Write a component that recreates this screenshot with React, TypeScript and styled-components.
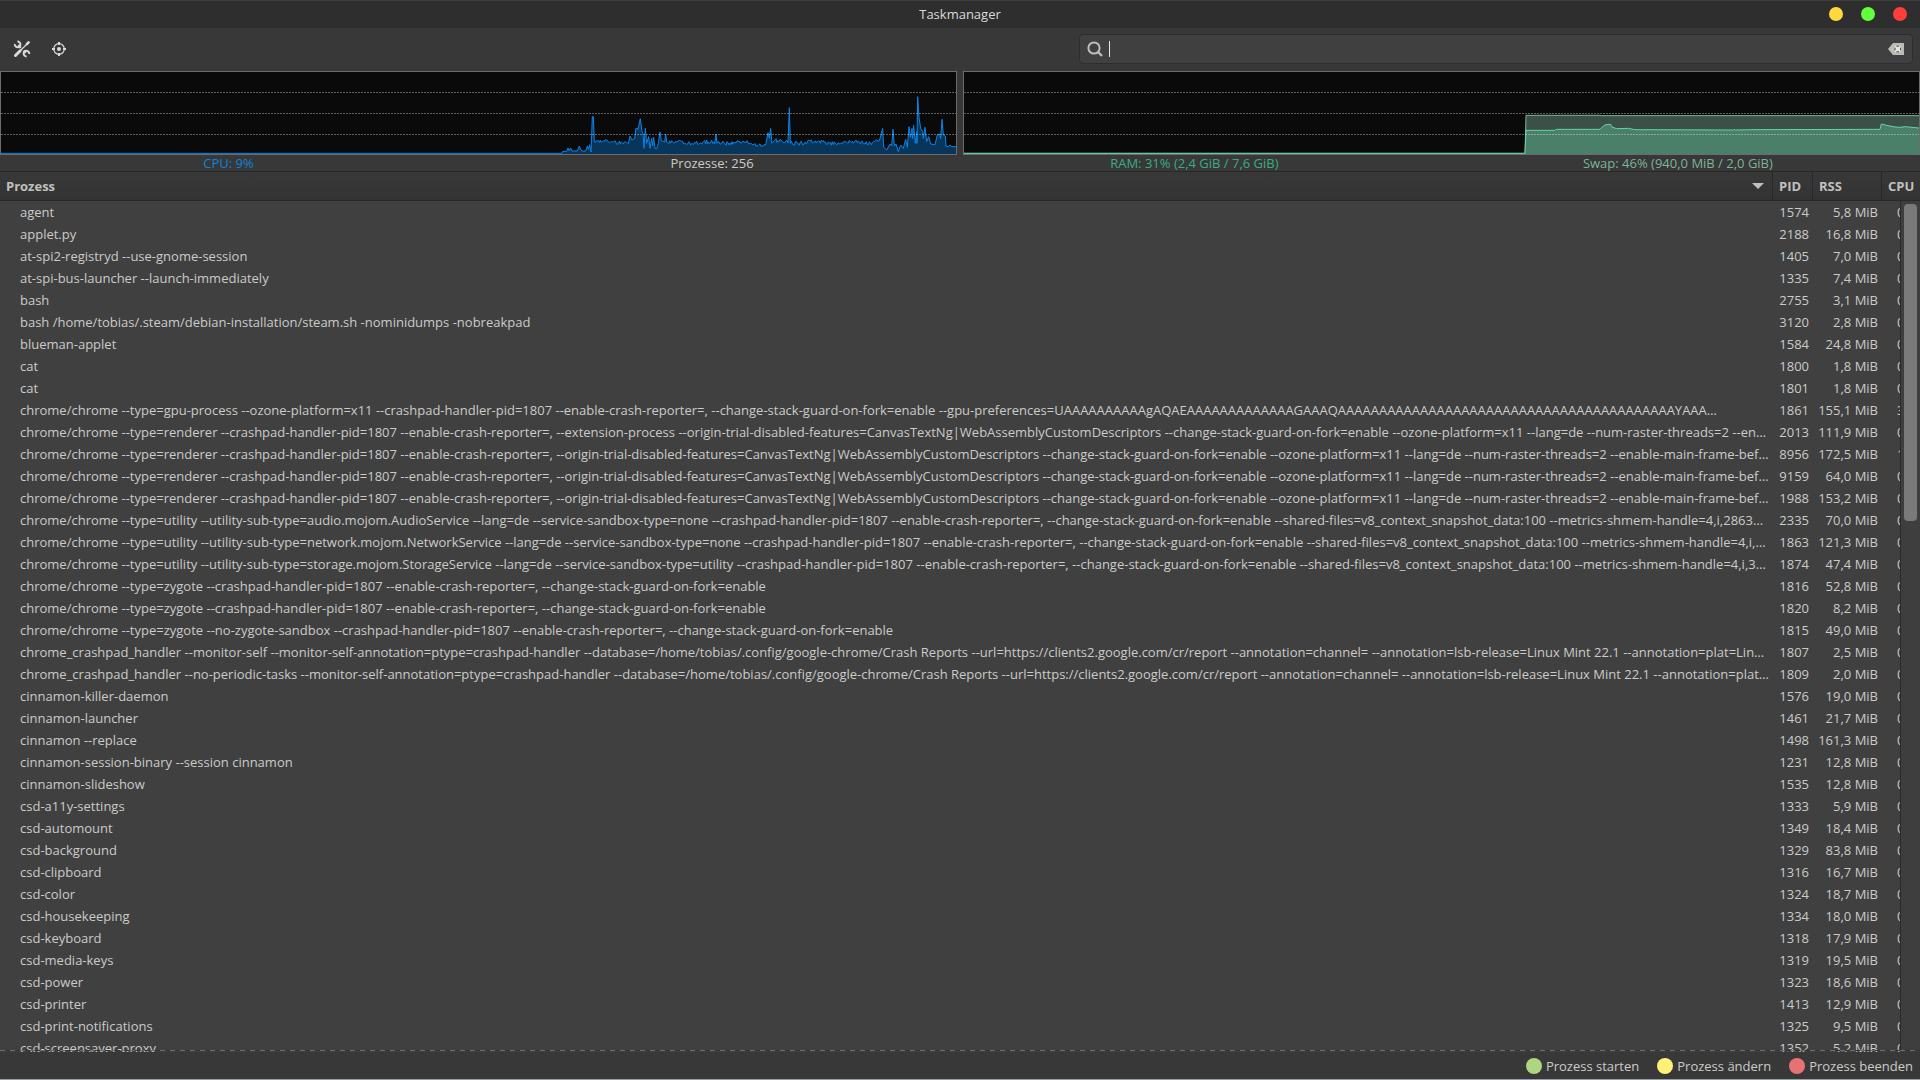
import React from 'react';
import styled, { createGlobalStyle } from 'styled-components';

const GlobalStyle = createGlobalStyle`
  * { box-sizing: border-box; }
  body {
    margin: 0;
    background: #383838;
    color: #cbcbc9;
    font: 13px/16px "Open Sans", "Noto Sans", sans-serif;
  }
  button, input { font: inherit; color: inherit; }
`;

const Window = styled.div`
  display: flex;
  flex-direction: column;
  height: 100vh;
  overflow: hidden;
  background: #383838;
  border-bottom: 1px solid #96a0a5;
`;

const TitleBar = styled.header`
  display: grid;
  grid-template-columns: 1fr auto 1fr;
  align-items: center;
  height: 28px;
  padding: 0 13px 1px;
  border-top: 1px solid #3d3d3d;
  background: #2e2e2e;
`;

const Title = styled.h1`
  grid-column: 2;
  margin: 0;
  font-size: 13px;
  font-weight: 400;
  color: #dadada;
`;

const WindowControls = styled.div`
  display: flex;
  justify-content: flex-end;
  gap: 18px;
`;

const WindowButton = styled.button<{ $color: string }>`
  width: 14px;
  height: 14px;
  padding: 0;
  border: 0;
  border-radius: 50%;
  background: ${(p) => p.$color};
`;

const Toolbar = styled.div`
  display: flex;
  align-items: center;
  justify-content: space-between;
  height: 43px;
  padding: 0 7px 1px;
`;

const ToolGroup = styled.div`
  display: flex;
  gap: 7px;
`;

const ToolButton = styled.button`
  display: grid;
  place-items: center;
  width: 30px;
  height: 30px;
  padding: 0;
  border: 0;
  background: none;
  color: #dadada;
`;

const SearchBox = styled.label`
  display: flex;
  align-items: center;
  gap: 6px;
  width: 834px;
  max-width: 60%;
  height: 30px;
  padding: 0 8px 0 7px;
  border: 1px solid #2a2d33;
  border-radius: 4px;
  background: #404040;
`;

const Caret = styled.span`
  width: 1px;
  height: 16px;
  background: #e6e6e6;
`;

const SearchInput = styled.input`
  flex: 1;
  min-width: 0;
  padding: 0;
  border: 0;
  outline: 0;
  background: none;
  caret-color: transparent;
`;

const ClearButton = styled.button`
  display: flex;
  padding: 0;
  border: 0;
  background: none;
  color: #bbbcb7;
`;

const Monitors = styled.div`
  display: grid;
  grid-template-columns: 1fr 1fr;
  gap: 6px;
`;

const Monitor = styled.section`
  min-width: 0;
`;

const Plot = styled.svg`
  display: block;
  width: 100%;
  height: 84px;
  border: 1px solid #6c6c6c;
  background: #0a0a0a;

  * { vector-effect: non-scaling-stroke; }
`;

const Readings = styled.div`
  display: flex;
  gap: 10px;
  height: 16px;
`;

const Reading = styled.span<{ $color: string }>`
  flex: 1 1 auto;
  text-align: center;
  color: ${(p) => p.$color};
`;

const ListPane = styled.main`
  position: relative;
  flex: 1;
  min-height: 0;
  overflow: hidden;
  background: #404040;
`;

const ProcessTable = styled.table`
  width: 100%;
  table-layout: fixed;
  border-collapse: separate;
  border-spacing: 0;
`;

const HeaderCell = styled.th<{ $width?: number }>`
  width: ${(p) => (p.$width ? `${p.$width}px` : 'auto')};
  height: 30px;
  padding: 0;
  border: solid #282828;
  border-width: 1px 1px 1px 0;
  background: linear-gradient(#383838, #333333);

  &:last-child { border-right: 0; }
`;

const SortButton = styled.button`
  display: flex;
  align-items: center;
  justify-content: space-between;
  width: 100%;
  height: 28px;
  padding: 0 7px 0 6px;
  border: 0;
  background: none;
  font-weight: 700;
  color: #c0c0be;
  white-space: nowrap;
`;

const SortArrow = styled.span`
  margin-right: 1px;
  border: solid transparent;
  border-width: 6px 6px 0;
  border-top-color: #c0c0be;
`;

const NameCell = styled.td`
  height: 22px;
  padding: 0 4px 0 20px;
  overflow: hidden;
  text-overflow: ellipsis;
  white-space: nowrap;
`;

const NumberCell = styled.td`
  padding: 0 4px 0 0;
  text-align: right;
  white-space: nowrap;
`;

const CpuCell = styled.td`
  padding: 0 20px 0 15px;
  overflow: hidden;
  white-space: nowrap;
`;

const CpuValue = styled.span`
  display: block;
  overflow: hidden;
`;

const ScrollTrack = styled.div`
  position: absolute;
  top: 30px;
  right: 0;
  bottom: 0;
  width: 20px;
  padding: 3px;
  border-left: 1px solid #2a2a2a;
  background: #3e3e3e;
`;

const ScrollThumb = styled.div`
  height: 37.5%;
  border-radius: 4px;
  background: #7a7a7a;
`;

const Undershoot = styled.div`
  position: absolute;
  right: 0;
  bottom: 1px;
  left: 0;
  height: 1px;
  background: repeating-linear-gradient(90deg, #6e6e6e 0 5px, #333333 5px 10px);
`;

const Legend = styled.ul`
  display: flex;
  justify-content: flex-end;
  align-items: center;
  gap: 18px;
  height: 27px;
  margin: 0;
  padding: 0 7px;
  list-style: none;
`;

const LegendItem = styled.li<{ $color: string }>`
  display: flex;
  align-items: center;
  gap: 4px;

  &::before {
    content: "";
    width: 16px;
    height: 16px;
    border-radius: 50%;
    background: ${(p) => p.$color};
  }
`;

type Point = [number, number];

/* Small steady load jitter between two busy moments. */
const idle = (from: number, to: number, level: number): Point[] => {
  const out: Point[] = [];
  for (let x = from, i = 0; x < to; x += 3, i += 1) {
    const r = Math.abs(Math.sin((x + i) * 12.9898) * 43758.5453) % 1;
    const wave = Math.sin(x / 17) * 3;
    out.push([x, level + wave + (r - 0.5) * 12]);
  }
  return out;
};

const cpuHistory: Point[] = [
  [-1617, 280], [66, 280], [68, 274], [80, 274], [84, 264], [87, 272], [92, 264], [96, 273],
  [112, 273], [118, 258], [122, 270], [130, 274], [138, 272], [142, 258], [145, 268], [149, 254],
  [153, 276], [157, 170], [160, 170],
  ...idle(163, 268, 246),
  [270, 228], [276, 240], [284, 236], [288, 204], [294, 208], [301, 176], [306, 215], [309, 220],
  [312, 265], [316, 205], [320, 250], [326, 230], [330, 265], [335, 235], [338, 258], [341, 232],
  [345, 265], [350, 266], [355, 250], [360, 216], [364, 242], [374, 246], [377, 222], [380, 246],
  ...idle(383, 525, 248),
  [528, 222], [531, 250],
  ...idle(534, 630, 247),
  ...idle(630, 681, 252),
  [684, 218], [688, 235], [692, 205], [696, 250], [708, 236],
  ...idle(711, 745, 245),
  [748, 143], [751, 250],
  ...idle(754, 1006, 247),
  [1010, 240], [1016, 244], [1020, 236], [1028, 205], [1031, 262], [1040, 270], [1050, 252],
  [1055, 258], [1059, 208], [1063, 258], [1068, 252], [1075, 275], [1082, 255], [1090, 265],
  [1097, 238], [1102, 262], [1107, 200], [1111, 232], [1116, 205], [1118, 236], [1121, 196],
  [1126, 250], [1130, 215], [1131, 250], [1133, 110], [1137, 172], [1142, 205], [1148, 215],
  [1150, 235], [1155, 202], [1160, 245], [1166, 230], [1172, 252], [1185, 254], [1192, 225],
  [1198, 222], [1202, 236], [1206, 178], [1210, 225], [1216, 228], [1218, 258], [1224, 260],
  [1230, 255], [1236, 260], [1248, 260],
];

const swapHistory: Point[] = [[-1608, 460], [75, 460], [78, 346], [300, 346], [304, 347], [1257, 347]];

const ramHistory: Point[] = [
  [-1608, 460], [75, 460], [78, 391], [165, 391], [168, 388], [210, 388], [300, 388], [310, 378],
  [318, 374], [332, 373], [336, 381], [350, 386], [385, 385], [405, 389], [700, 390], [702, 388],
  [706, 390], [756, 389], [1140, 388], [1144, 372], [1160, 376], [1185, 381], [1200, 382],
  [1215, 380], [1257, 384],
];

type Series = { points: Point[]; line: string; fill: string };

function HistoryPlot({ label, left, top, series }: { label: string; left: number; top: number; series: Series[] }) {
  const right = left + 2865;
  const bottom = top + 246;
  return (
    <Plot viewBox={`${left} ${top} 2865 246`} preserveAspectRatio="none" role="img" aria-label={label}>
      {series.map((s) => {
        const line = s.points.map((p) => p.join(',')).join(' ');
        return (
          <g key={s.line}>
            <polygon points={`${left},${bottom} ${line} ${right},${bottom}`} fill={s.fill} />
            <polyline points={line} fill="none" stroke={s.line} strokeWidth="1" />
          </g>
        );
      })}
      {[61.5, 124.5, 187.5].map((y) => (
        <line
          key={y}
          x1={left}
          x2={right}
          y1={top + y}
          y2={top + y}
          stroke="#ffffff"
          strokeOpacity="0.34"
          strokeDasharray="2 1"
        />
      ))}
    </Plot>
  );
}

const ToolsIcon = () => (
  <svg width="18" height="18" viewBox="0 0 18 18" fill="none" stroke="currentColor" aria-hidden="true">
    <path d="M2.5 15.5 L7.2 10.8" strokeWidth="3" strokeLinecap="round" />
    <path d="M7.5 10.5 L14.5 3.5" strokeWidth="1.3" />
    <path d="M13.8 4.2 L15.6 2.4" strokeWidth="2.6" strokeLinecap="round" />
    <path d="M5.2 5.2 L7.8 7.8 M10.6 10.6 L12.8 12.8" strokeWidth="2.4" />
    <path d="M1.8 4 a2.8 2.8 0 1 0 2.6 -2.4 M16.2 14 a2.8 2.8 0 1 0 -2.6 2.4" strokeWidth="2" />
  </svg>
);

const TargetIcon = () => (
  <svg width="14" height="14" viewBox="0 0 14 14" fill="none" stroke="currentColor" aria-hidden="true">
    <circle cx="7" cy="7" r="5.3" strokeWidth="1.2" />
    <circle cx="7" cy="7" r="2" fill="currentColor" stroke="none" />
    <path d="M7 0v3M7 11v3M0 7h3M11 7h3" strokeWidth="2" />
  </svg>
);

const SearchIcon = () => (
  <svg width="16" height="16" viewBox="0 0 16 16" fill="none" stroke="#bdbdbb" strokeWidth="2" aria-hidden="true">
    <circle cx="7" cy="7" r="5.6" />
    <path d="M11 11l4 4" strokeWidth="2.4" />
  </svg>
);

const ClearIcon = () => (
  <svg width="16" height="12" viewBox="0 0 16 12" aria-hidden="true">
    <path d="M0 6L5 0h11v12H5z" fill="currentColor" />
    <path d="M7 3.2l5.5 5.6M12.5 3.2L7 8.8" stroke="#e8e8e6" strokeWidth="2" />
    <path d="M7 4.6v2.8M12.5 4.6v2.8M8.4 3.2h2.8M8.4 8.8h2.8" stroke="#5a5a58" strokeWidth="1" />
  </svg>
);

const DISABLED = '--origin-trial-disabled-features=CanvasTextNg|WebAssemblyCustomDescriptors';
const STACK = '--change-stack-guard-on-fork=enable';
const CRASH = '--crashpad-handler-pid=1807 --enable-crash-reporter=,';
const RENDERER = `chrome/chrome --type=renderer ${CRASH} ${DISABLED} ${STACK} --ozone-platform=x11 --lang=de --num-raster-threads=2 --enable-main-frame-befor…`;
const GPU_PREFS = `U${'A'.repeat(10)}gAQAE${'A'.repeat(13)}GAAAQ${'A'.repeat(41)}YAAA…`;
const SNAPSHOT = '--shared-files=v8_context_snapshot_data:100 --metrics-shmem-handle=4,i,';
const REPORT = '--monitor-self-annotation=ptype=crashpad-handler --database=/home/tobias/.config/google-chrome/Crash Reports --url=https://clients2.google.com/cr/report --annotation=channel= --annotation=lsb-release=Linux Mint 22.1';

const processes: [string, number, string, string?][] = [
  ['agent', 1574, '5,8'],
  ['applet.py', 2188, '16,8'],
  ['at-spi2-registryd --use-gnome-session', 1405, '7,0'],
  ['at-spi-bus-launcher --launch-immediately', 1335, '7,4'],
  ['bash', 2755, '3,1'],
  ['bash /home/tobias/.steam/debian-installation/steam.sh -nominidumps -nobreakpad', 3120, '2,8'],
  ['blueman-applet', 1584, '24,8'],
  ['cat', 1800, '1,8'],
  ['cat', 1801, '1,8'],
  [`chrome/chrome --type=gpu-process --ozone-platform=x11 ${CRASH} ${STACK} --gpu-preferences=${GPU_PREFS}`, 1861, '155,1', '3%'],
  [`chrome/chrome --type=renderer ${CRASH} --extension-process ${DISABLED} ${STACK} --ozone-platform=x11 --lang=de --num-raster-threads=2 --enabl…`, 2013, '111,9'],
  [RENDERER, 8956, '172,5', '1%'],
  [RENDERER, 9159, '64,0'],
  [RENDERER, 1988, '153,2'],
  [`chrome/chrome --type=utility --utility-sub-type=audio.mojom.AudioService --lang=de --service-sandbox-type=none ${CRASH} ${STACK} ${SNAPSHOT}28631…`, 2335, '70,0'],
  [`chrome/chrome --type=utility --utility-sub-type=network.mojom.NetworkService --lang=de --service-sandbox-type=none ${CRASH} ${STACK} ${SNAPSHOT}1…`, 1863, '121,3'],
  [`chrome/chrome --type=utility --utility-sub-type=storage.mojom.StorageService --lang=de --service-sandbox-type=utility ${CRASH} ${STACK} ${SNAPSHOT}37…`, 1874, '47,4'],
  [`chrome/chrome --type=zygote ${CRASH} ${STACK}`, 1816, '52,8'],
  [`chrome/chrome --type=zygote ${CRASH} ${STACK}`, 1820, '8,2'],
  [`chrome/chrome --type=zygote --no-zygote-sandbox ${CRASH} ${STACK}`, 1815, '49,0'],
  [`chrome_crashpad_handler --monitor-self ${REPORT} --annotation=plat=Lin…`, 1807, '2,5'],
  [`chrome_crashpad_handler --no-periodic-tasks ${REPORT} --annotation=plat…`, 1809, '2,0'],
  ['cinnamon-killer-daemon', 1576, '19,0'],
  ['cinnamon-launcher', 1461, '21,7'],
  ['cinnamon --replace', 1498, '161,3'],
  ['cinnamon-session-binary --session cinnamon', 1231, '12,8'],
  ['cinnamon-slideshow', 1535, '12,8'],
  ['csd-a11y-settings', 1333, '5,9'],
  ['csd-automount', 1349, '18,4'],
  ['csd-background', 1329, '83,8'],
  ['csd-clipboard', 1316, '16,7'],
  ['csd-color', 1324, '18,7'],
  ['csd-housekeeping', 1334, '18,0'],
  ['csd-keyboard', 1318, '17,9'],
  ['csd-media-keys', 1319, '19,5'],
  ['csd-power', 1323, '18,6'],
  ['csd-printer', 1413, '12,9'],
  ['csd-print-notifications', 1325, '9,5'],
  ['csd-screensaver-proxy', 1352, '5,2'],
];

export default function App() {
  return (
    <Window>
      <GlobalStyle />
      <TitleBar>
        <Title>Taskmanager</Title>
        <WindowControls>
          <WindowButton $color="#ffd83d" aria-label="Minimieren" />
          <WindowButton $color="#62ff3d" aria-label="Maximieren" />
          <WindowButton $color="#ff3d3d" aria-label="Schließen" />
        </WindowControls>
      </TitleBar>

      <Toolbar>
        <ToolGroup>
          <ToolButton aria-label="Einstellungen"><ToolsIcon /></ToolButton>
          <ToolButton aria-label="Fenster auswählen"><TargetIcon /></ToolButton>
        </ToolGroup>
        <SearchBox>
          <SearchIcon />
          <Caret />
          <SearchInput type="text" aria-label="Prozess suchen" />
          <ClearButton type="button" aria-label="Leeren"><ClearIcon /></ClearButton>
        </SearchBox>
      </Toolbar>

      <Monitors>
        <Monitor>
          <HistoryPlot
            label="CPU"
            left={-1617}
            top={36}
            series={[{ points: cpuHistory, line: '#0a84ea', fill: '#08355a' }]}
          />
          <Readings>
            <Reading $color="#0f82dc">CPU: 9%</Reading>
            <Reading $color="#cbcbc9">Prozesse: 256</Reading>
          </Readings>
        </Monitor>
        <Monitor>
          <HistoryPlot
            label="RAM und Swap"
            left={-1608}
            top={216}
            series={[
              { points: swapHistory, line: '#7ab89f', fill: '#3b5047' },
              { points: ramHistory, line: '#66d3a8', fill: '#4a806a' },
            ]}
          />
          <Readings>
            <Reading $color="#37ae82">RAM: 31% (2,4 GiB / 7,6 GiB)</Reading>
            <Reading $color="#7ab598">Swap: 46% (940,0 MiB / 2,0 GiB)</Reading>
          </Readings>
        </Monitor>
      </Monitors>

      <ListPane>
        <ProcessTable>
          <thead>
            <tr>
              <HeaderCell scope="col" aria-sort="ascending"><SortButton>Prozess<SortArrow /></SortButton></HeaderCell>
              <HeaderCell scope="col" $width={40}><SortButton>PID</SortButton></HeaderCell>
              <HeaderCell scope="col" $width={69}><SortButton>RSS</SortButton></HeaderCell>
              <HeaderCell scope="col" $width={38}><SortButton>CPU</SortButton></HeaderCell>
            </tr>
          </thead>
          <tbody>
            {processes.map(([name, pid, rss, cpu = '0%']) => (
              <tr key={pid}>
                <NameCell>{name}</NameCell>
                <NumberCell>{pid}</NumberCell>
                <NumberCell>{rss} MiB</NumberCell>
                <CpuCell><CpuValue>{cpu}</CpuValue></CpuCell>
              </tr>
            ))}
          </tbody>
        </ProcessTable>
        <ScrollTrack><ScrollThumb /></ScrollTrack>
        <Undershoot />
      </ListPane>

      <Legend>
        <LegendItem $color="#aed581">Prozess starten</LegendItem>
        <LegendItem $color="#fff176">Prozess ändern</LegendItem>
        <LegendItem $color="#e57373">Prozess beenden</LegendItem>
      </Legend>
    </Window>
  );
}
